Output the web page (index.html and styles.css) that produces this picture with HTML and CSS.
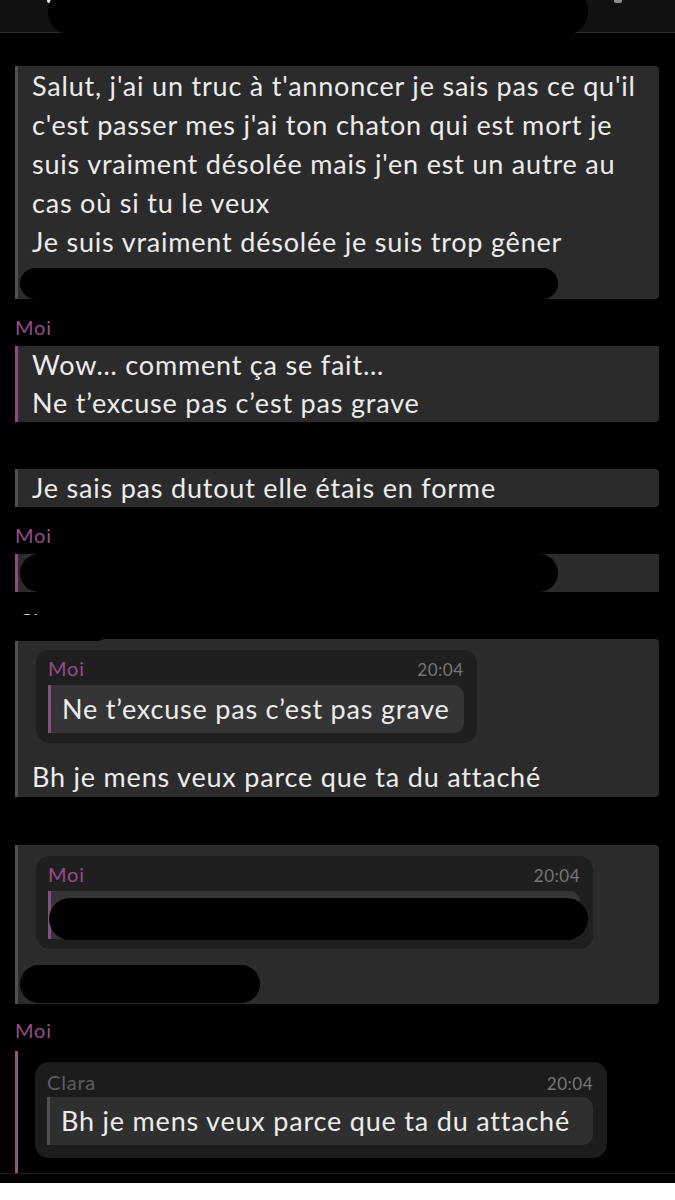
FILE: index.html
```html
<!DOCTYPE html>
<html lang="fr">
<head>
    <meta charset="UTF-8">
    <meta name="viewport" content="width=device-width, initial-scale=1.0">
    <title>Chat</title>
    <link rel="stylesheet" href="styles.css">
</head>
<body>
<div class="screen">
    <header class="topbar">
        <span class="tip tip-back"></span>
        <span class="tip tip-menu"></span>
        <span class="redact redact-title"></span>
    </header>

    <main class="chat">
        <div class="msg them msg-first">
            <p class="lines">Salut, j'ai un truc à t'annoncer je sais pas ce qu'il<br>c'est passer mes j'ai ton chaton qui est mort je<br>suis vraiment désolée mais j'en est un autre au<br>cas où si tu le veux<br>Je suis vraiment désolée je suis trop gêner</p>
            <div class="line-redacted"><span class="redact redact-wide"></span></div>
        </div>

        <div class="sender me">Moi</div>
        <div class="msg me-line">Wow… comment ça se fait…</div>
        <div class="msg me-line">Ne t’excuse pas c’est pas grave</div>

        <div class="msg them spaced">Je sais pas dutout elle étais en forme</div>

        <div class="sender me">Moi</div>
        <div class="msg me-line"><span class="redact redact-full"></span></div>

        <div class="sender other">Clara<span class="redact redact-name"></span></div>
        <div class="msg them boxed">
            <div class="quote">
                <div class="quote-head"><span class="me">Moi</span><span class="time">20:04</span></div>
                <div class="bubble bubble-me">Ne t’excuse pas c’est pas grave</div>
            </div>
            <div class="reply">Bh je mens veux parce que ta du attaché</div>
        </div>

        <div class="msg them boxed spaced-lg">
            <div class="quote quote-wide">
                <div class="quote-head"><span class="me">Moi</span><span class="time">20:04</span></div>
                <div class="bubble bubble-me bubble-hidden"><span class="redact redact-bubble"></span></div>
            </div>
            <div class="reply reply-hidden"><span class="redact redact-short"></span></div>
        </div>

        <div class="sender me sender-last">Moi</div>
        <div class="thread me-thread">
            <div class="quote quote-dark">
                <div class="quote-head"><span class="other-name">Clara</span><span class="time">20:04</span></div>
                <div class="bubble bubble-them">Bh je mens veux parce que ta du attaché</div>
            </div>
        </div>
    </main>
    <div class="bottom-line"></div>
</div>
</body>
</html>
```

FILE: styles.css
```css
* { box-sizing: border-box; }
body { margin: 0; background: #fff; font-family: Lato, "Noto Sans", sans-serif; color: #ececec; }
.screen { width: 675px; height: 1183px; background: #000; overflow: hidden; display: flex; flex-direction: column; }

.topbar { position: relative; height: 33px; background: #111; border-bottom: 1px solid #2a2a2a; flex-shrink: 0; }
.tip { position: absolute; top: 0; height: 3px; border-radius: 0 0 2px 2px; }
.tip-back { left: 47px; width: 6px; background: #e6e6e6; }
.tip-menu { left: 614px; width: 8px; background: #8a8a8a; }

.redact { display: block; background: #000; }
.redact-title { position: absolute; left: 48px; top: -12px; width: 540px; height: 47px; border-radius: 23px; }

.chat { flex: 1; padding: 33px 16px 0 15px; }

.msg { font-size: 27px; letter-spacing: 0.8px; line-height: 38px; white-space: nowrap; padding-left: 14px; border-left: 3px solid #505050; background: #2b2b2b; border-radius: 0 4px 4px 0; }
.msg.me-line { border-left-color: #8a4d80; border-radius: 0; }
.msg.me-line + .msg.me-line { border-radius: 0 0 4px 0; }
.msg.me-line:first-of-type { border-radius: 0 4px 0 0; }

.lines { margin: 0; line-height: 39px; }
.line-redacted { height: 38px; padding-top: 7px; }
.redact-wide { margin-left: -12px; width: 538px; height: 31px; border-radius: 16px; }
.redact-full { margin-left: -12px; width: 538px; height: 38px; border-radius: 19px; }

.sender { font-size: 20px; letter-spacing: 0.8px; line-height: 22px; margin: 17px 0 8px; }
.me { color: #974b8b; }
.sender.other { position: relative; color: #ddd; padding-left: 4px; }
.redact-name { position: absolute; left: -20px; top: 6px; width: 115px; height: 26px; border-radius: 0 0 13px 0; }
.sender-last { margin: 15px 0 10px; }

.spaced { margin-top: 47px; }
.spaced-lg { margin-top: 48px; }

.boxed { padding-top: 11px; padding-bottom: 1px; white-space: normal; }
.quote { width: fit-content; margin-left: 4px; background: #1f1f1f; border-radius: 14px; padding: 6px 13px 10px 12px; }
.quote-head { display: flex; justify-content: space-between; align-items: baseline; height: 24px; line-height: 24px; margin-bottom: 5px; }
.quote-head .me, .other-name { font-size: 20px; letter-spacing: 0.8px; }
.other-name { color: #5e5e5e; }
.time { font-size: 17px; letter-spacing: 0.5px; color: #777; }

.bubble { height: 48px; line-height: 48px; font-size: 27px; letter-spacing: 0.8px; white-space: nowrap; padding: 0 14px 0 11px; border-left: 3px solid #8a4d80; background: #353535; border-radius: 0 10px 10px 0; }
.bubble-them { border-left-color: #4f4f4f; background: #2f2f2f; padding-right: 23px; }

.reply { margin-top: 15px; height: 38px; line-height: 38px; }

.quote-wide { width: 557px; }
.bubble-hidden { position: relative; }
.redact-bubble { position: absolute; left: -2px; top: 7px; width: 539px; height: 42px; border-radius: 21px; }
.reply-hidden { margin-top: 16px; }
.redact-short { margin-left: -12px; width: 240px; height: 38px; border-radius: 19px; }

.thread { border-left: 3px solid #8a5a84; padding: 11px 0 15px 14px; }
.me-thread .quote { margin-left: 3px; }
.quote-dark { background: #1c1c1c; padding-top: 8px; padding-bottom: 13px; padding-right: 14px; margin-left: 0; }
.quote-dark .quote-head { margin-bottom: 3px; }

.bottom-line { height: 11px; border-top: 1px solid #1e1e1e; flex-shrink: 0; }
```
